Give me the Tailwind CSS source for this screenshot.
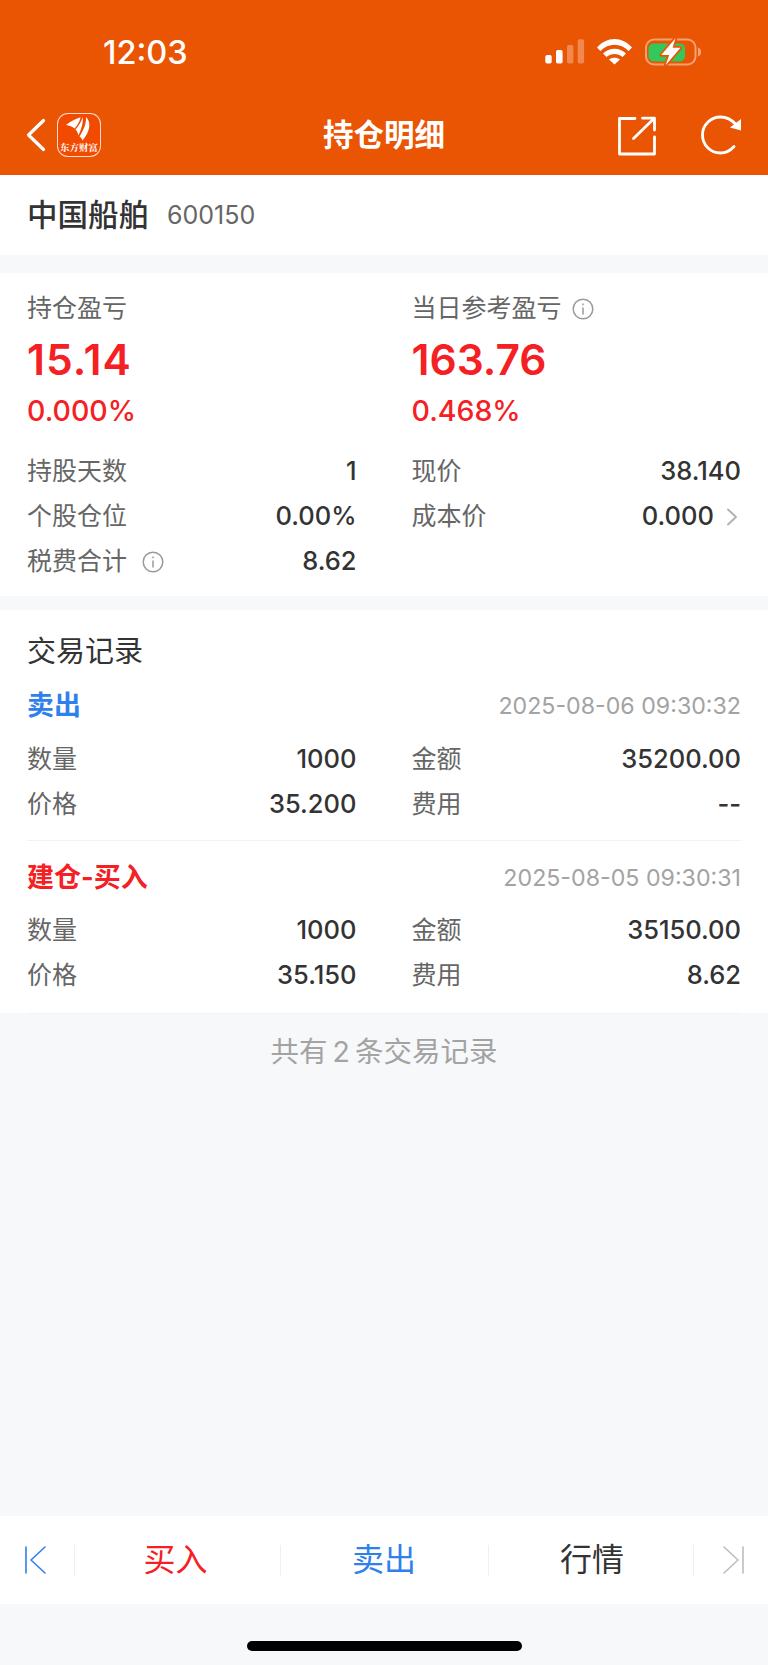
<!DOCTYPE html>
<html lang="zh-CN">
<head>
    <meta charset="UTF-8">
    <meta name="viewport" content="width=device-width, initial-scale=1.0">
    <title>持仓明细</title>
    <script src="https://cdn.jsdelivr.net/npm/@tailwindcss/browser@4"></script>
</head>
<body class="bg-[#f7f8fa] font-['Inter','Noto_Sans_CJK_SC',sans-serif]">
<div class="w-[768px] h-[1665px] flex flex-col overflow-hidden">

    <!-- Orange header -->
    <header class="bg-[#ea5504] text-white h-[175px]">
        <div class="h-[104px] relative">
            <span class="absolute left-[103px] top-[34px] text-[32.5px] leading-[38px] font-medium">12:03</span>
            <svg class="absolute left-[540px] top-[34px]" width="170" height="36" viewBox="540 34 170 36">
                <rect x="545.3" y="55" width="6.4" height="8.5" rx="1.8" fill="#fff"/>
                <rect x="556" y="50" width="6.6" height="13.5" rx="1.8" fill="#fff"/>
                <rect x="567" y="45" width="6.4" height="18.5" rx="1.8" fill="#fff" fill-opacity=".3"/>
                <rect x="577.7" y="39.3" width="6.4" height="24.2" rx="1.8" fill="#fff" fill-opacity=".3"/>
                <path d="M597 47.5C607 36 622 36 632 47.5L628.6 51C620.5 42.5 608.5 42.5 600.4 51Z" fill="#fff"/>
                <path d="M603 53.5C609.5 47 619.5 47 626 53.5L622.6 57C618 53 611 53 606.4 57Z" fill="#fff"/>
                <path d="M609 59.5C612 57 617 57 620 59.5L614.5 64.5Z" fill="#fff"/>
                <rect x="646" y="39.5" width="49.5" height="25" rx="8" fill="none" stroke="#fff" stroke-opacity=".45" stroke-width="2"/>
                <path d="M698 47.5C700.5 48.5 701 50 701 52C701 54 700.5 55.5 698 56.5Z" fill="#fff" fill-opacity=".45"/>
                <rect x="648.5" y="43.5" width="36.5" height="18" rx="5" fill="#34c759"/>
                <path d="M675.5 38.2L661.2 55H669.2L665.6 65.2L680.5 47.8H672.6Z" fill="#fff" stroke="#ea5504" stroke-width="3.4" paint-order="stroke" stroke-linejoin="round"/>
            </svg>
        </div>
        <div class="h-[71px] relative flex items-center justify-center">
            <svg class="absolute left-[25px] top-[14px]" width="22" height="34" viewBox="0 0 22 34" fill="none">
                <path d="M18.5 2.5L3.5 17L18.5 31.5" stroke="#fff" stroke-width="3.2" stroke-linecap="round" stroke-linejoin="round"/>
            </svg>
            <div class="absolute left-[57px] top-[9px] w-[44px] h-[44px] rounded-[11px] bg-[#f24a00] border border-white/80 overflow-hidden">
                <svg class="absolute left-[-1px] top-[-1px]" width="44" height="30" viewBox="0 0 44 30" fill="#fff">
                    <path d="M9 12C13.5 8.5 18 6 23.5 4.2C23 8.5 20.5 12 17.5 15.5C15.5 13.5 12.5 12.5 9 12Z"/>
                    <path d="M25.5 4C26.5 9.5 24.5 15.5 21.5 22.5C21 20 20 18 18.5 16.5C22 12.5 24.5 8.5 25.5 4Z"/>
                    <path d="M29 4C34 8.5 34 17.5 25.5 27.5C25 25.5 24 24.5 22.5 23.5C27 16.5 29.5 10 29 4Z"/>
                </svg>
                <span class="absolute left-0 right-0 top-[28px] text-center text-[9.5px] leading-[11px] font-bold font-['Noto_Serif_CJK_SC',serif] whitespace-nowrap">东方财富</span>
            </div>
            <h1 class="text-[30.5px] leading-[40px] font-bold mt-[-9px]">持仓明细</h1>
            <svg class="absolute left-[617px] top-[12px]" width="40" height="40" viewBox="0 0 40 40" fill="none" stroke="#fff" stroke-width="2.8" stroke-linecap="round" stroke-linejoin="round">
                <path d="M18 2.5H2.5V38H37.5V21"/>
                <path d="M16.5 22.5L37 2.5"/>
                <path d="M25.5 2.2H37.5V14"/>
            </svg>
            <svg class="absolute left-[701px] top-[11px]" width="42" height="40" viewBox="0 0 42 40" fill="none">
                <path d="M33 31.5C29.5 35.5 25 38 19.5 38C9.5 38 1.5 30 1.5 20C1.5 10 9.5 2 19.5 2C26 2 31 5 35 9.5" stroke="#fff" stroke-width="2.8" stroke-linecap="round"/>
                <path d="M40 4V15.5L29 12.5Z" fill="#fff"/>
            </svg>
        </div>
    </header>

    <!-- Stock title -->
    <section class="bg-white h-[80px] px-[27px] flex items-center gap-[18px]">
        <span class="text-[30.5px] leading-[40px] font-medium text-[#333]">中国船舶</span>
        <span class="text-[25px] leading-[40px] text-[#666]">600150</span>
    </section>

    <!-- Position summary -->
    <section class="bg-white mt-[18px] h-[323px] px-[27px] pt-[18px]">
        <div class="grid grid-cols-2 gap-x-[55px]">
            <div>
                <div class="h-[36px] flex items-center text-[25px] text-[#666]">持仓盈亏</div>
                <div class="h-[50px] mt-[8px] flex items-center text-[42.5px] font-semibold tracking-[1px] text-[#f42024]">15.14</div>
                <div class="h-[36px] mt-[8px] flex items-center text-[28.5px] font-medium text-[#f42024]">0.000%</div>
            </div>
            <div>
                <div class="h-[36px] flex items-center gap-[10px] text-[25px] text-[#666]">
                    当日参考盈亏
                    <svg width="22" height="22" viewBox="0 0 22 22" fill="none" stroke="#9a9a9a" stroke-width="1.5"><circle cx="11" cy="11" r="9.8"/><path d="M11 9.5V16.5"/><path d="M11 5.5V7.3"/></svg>
                </div>
                <div class="h-[50px] mt-[8px] flex items-center text-[42.5px] font-semibold text-[#f42024]">163.76</div>
                <div class="h-[36px] mt-[8px] flex items-center text-[28.5px] font-medium text-[#f42024]">0.468%</div>
            </div>
        </div>
        <div class="grid grid-cols-2 gap-x-[55px] mt-[20px] text-[25px]">
            <div class="h-[45px] flex items-center justify-between"><span class="text-[#666]">持股天数</span><span class="text-[25.5px] font-medium text-[#333]">1</span></div>
            <div class="h-[45px] flex items-center justify-between"><span class="text-[#666]">现价</span><span class="text-[25.5px] font-medium text-[#333]">38.140</span></div>
            <div class="h-[45px] flex items-center justify-between"><span class="text-[#666]">个股仓位</span><span class="text-[25.5px] font-medium text-[#333]">0.00%</span></div>
            <div class="h-[45px] flex items-center justify-between"><span class="text-[#666]">成本价</span>
                <span class="flex items-center gap-[11px] text-[25.5px] font-medium text-[#333]">0.000
                    <svg width="14" height="18" viewBox="0 0 14 18" fill="none" stroke="#b3b3b3" stroke-width="2" stroke-linecap="round" stroke-linejoin="round" class="mr-[2px]"><path d="M3 1.5L11 9L3 16.5"/></svg>
                </span>
            </div>
            <div class="h-[45px] flex items-center justify-between">
                <span class="flex items-center gap-[15px] text-[#666]">税费合计
                    <svg width="22" height="22" viewBox="0 0 22 22" fill="none" stroke="#9a9a9a" stroke-width="1.5"><circle cx="11" cy="11" r="9.8"/><path d="M11 9.5V16.5"/><path d="M11 5.5V7.3"/></svg>
                </span>
                <span class="text-[25.5px] font-medium text-[#333]">8.62</span>
            </div>
        </div>
    </section>

    <!-- Trade records -->
    <section class="bg-white mt-[14px] px-[27px] pt-[25px] h-[403px]">
        <div class="h-[34px] flex items-center text-[29px] text-[#333]">交易记录</div>

        <div class="pt-[17px] pb-[13px] border-b border-[#f1f2f4]">
            <div class="h-[40px] flex items-center justify-between">
                <span class="text-[27px] font-bold text-[#2f80ed]">卖出</span>
                <span class="text-[23.2px] text-[#a3a3a3]">2025-08-06 09:30:32</span>
            </div>
            <div class="grid grid-cols-2 gap-x-[55px] mt-[11px] text-[25px]">
                <div class="h-[45px] flex items-center justify-between"><span class="text-[#666]">数量</span><span class="text-[25.5px] font-medium text-[#333]">1000</span></div>
                <div class="h-[45px] flex items-center justify-between"><span class="text-[#666]">金额</span><span class="text-[25.5px] font-medium text-[#333]">35200.00</span></div>
                <div class="h-[45px] flex items-center justify-between"><span class="text-[#666]">价格</span><span class="text-[25.5px] font-medium text-[#333]">35.200</span></div>
                <div class="h-[45px] flex items-center justify-between"><span class="text-[#666]">费用</span><span class="text-[25.5px] font-medium text-[#333]">--</span></div>
            </div>
        </div>

        <div class="pt-[17px] pb-[15px] border-b border-[#f1f2f4]">
            <div class="h-[40px] flex items-center justify-between">
                <span class="text-[27px] font-bold text-[#f42024]">建仓-买入</span>
                <span class="text-[23.2px] text-[#a3a3a3]">2025-08-05 09:30:31</span>
            </div>
            <div class="grid grid-cols-2 gap-x-[55px] mt-[10px] text-[25px]">
                <div class="h-[45px] flex items-center justify-between"><span class="text-[#666]">数量</span><span class="text-[25.5px] font-medium text-[#333]">1000</span></div>
                <div class="h-[45px] flex items-center justify-between"><span class="text-[#666]">金额</span><span class="text-[25.5px] font-medium text-[#333]">35150.00</span></div>
                <div class="h-[45px] flex items-center justify-between"><span class="text-[#666]">价格</span><span class="text-[25.5px] font-medium text-[#333]">35.150</span></div>
                <div class="h-[45px] flex items-center justify-between"><span class="text-[#666]">费用</span><span class="text-[25.5px] font-medium text-[#333]">8.62</span></div>
            </div>
        </div>
    </section>

    <div class="h-[79px] flex items-center justify-center text-[28.5px] text-[#a3a3a3]">共有<span class="mx-[5px]">2</span>条交易记录</div>
    <div class="flex-1"></div>

    <!-- Bottom toolbar -->
    <nav class="bg-white h-[88px] flex items-center">
        <div class="w-[74px] h-[31px] pl-[24px] flex items-center">
            <svg width="24" height="30" viewBox="0 0 24 30" fill="none" stroke="#2f80ed" stroke-width="1.6" stroke-linecap="round" stroke-linejoin="round"><path d="M2 2V28"/><path d="M21 2L7 15L21 28"/></svg>
        </div>
        <div class="w-[206px] h-[31px] border-l border-[#eeeff1] pr-[4px] flex items-center justify-center text-[32px] text-[#f42024]">买入</div>
        <div class="w-[208px] h-[31px] border-l border-[#eeeff1] pr-[1px] flex items-center justify-center text-[32px] text-[#2f80ed]">卖出</div>
        <div class="w-[205px] h-[31px] border-l border-[#eeeff1] pl-[2px] flex items-center justify-center text-[32px] text-[#333]">行情</div>
        <div class="w-[75px] h-[31px] border-l border-[#eeeff1] pl-[27px] flex items-center">
            <svg width="24" height="30" viewBox="0 0 24 30" fill="none" stroke="#bdbdbd" stroke-width="1.6" stroke-linecap="round" stroke-linejoin="round"><path d="M22 2V28"/><path d="M3 2L17 15L3 28"/></svg>
        </div>
    </nav>

    <div class="h-[61px] flex justify-center pt-[37px] pl-[1px]">
        <div class="w-[275px] h-[10px] rounded-full bg-black"></div>
    </div>
</div>
</body>
</html>
